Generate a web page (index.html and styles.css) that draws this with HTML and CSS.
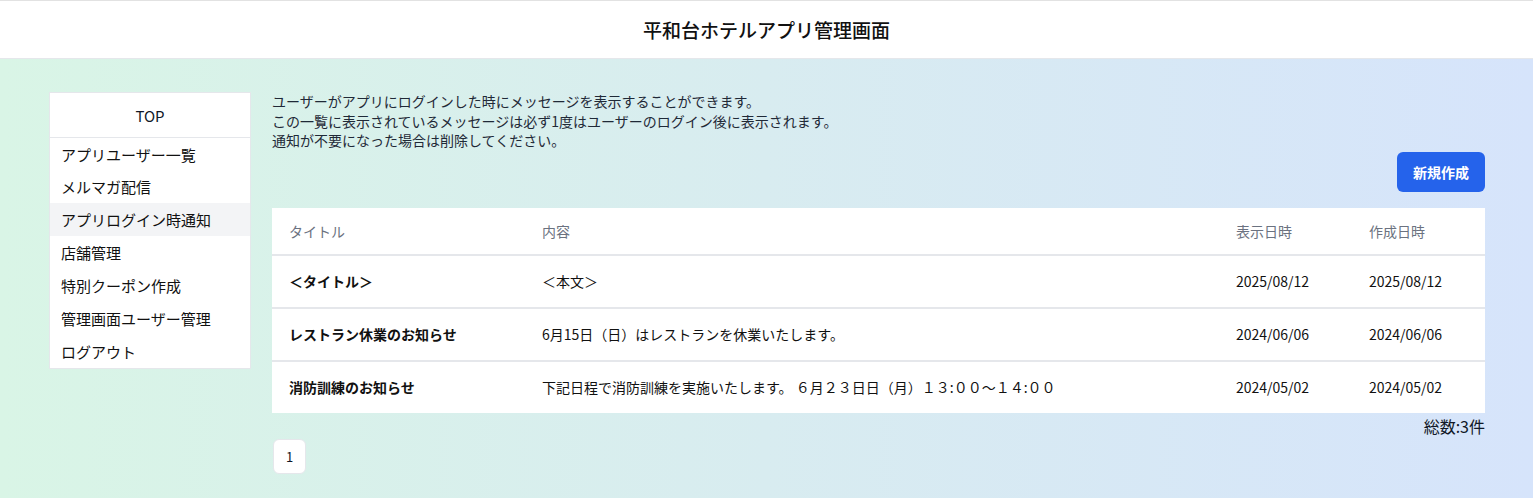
FILE: index.html
```html
<!DOCTYPE html>
<html lang="ja">
<head>
<meta charset="utf-8">
<link rel="stylesheet" href="styles.css">
</head>
<body>
<header class="topbar">
  <h1 class="title">平和台ホテルアプリ管理画面</h1>
</header>
<div class="page">
  <nav class="sidebar">
    <div class="side-top">TOP</div>
    <ul class="side-list">
      <li class="side-item">アプリユーザー一覧</li>
      <li class="side-item">メルマガ配信</li>
      <li class="side-item active">アプリログイン時通知</li>
      <li class="side-item">店舗管理</li>
      <li class="side-item">特別クーポン作成</li>
      <li class="side-item">管理画面ユーザー管理</li>
      <li class="side-item">ログアウト</li>
    </ul>
  </nav>
  <main class="main">
    <p class="desc">ユーザーがアプリにログインした時にメッセージを表示することができます。<br>この一覧に表示されているメッセージは必ず1度はユーザーのログイン後に表示されます。<br>通知が不要になった場合は削除してください。</p>
    <div class="actions"><button class="btn-new">新規作成</button></div>
    <table class="table">
      <thead>
        <tr><th class="c-title">タイトル</th><th class="c-body">内容</th><th class="c-date">表示日時</th><th class="c-date">作成日時</th></tr>
      </thead>
      <tbody>
        <tr><td class="strong">＜タイトル＞</td><td>＜本文＞</td><td>2025/08/12</td><td>2025/08/12</td></tr>
        <tr><td class="strong">レストラン休業のお知らせ</td><td>6月15日（日）はレストランを休業いたします。</td><td>2024/06/06</td><td>2024/06/06</td></tr>
        <tr><td class="strong">消防訓練のお知らせ</td><td>下記日程で消防訓練を実施いたします。 ６月２３日日（月）１３:００～１４:００</td><td>2024/05/02</td><td>2024/05/02</td></tr>
      </tbody>
    </table>
    <div class="total">総数:3件</div>
    <div class="pager"><span class="page-btn">1</span></div>
  </main>
</div>
</body>
</html>
```

FILE: styles.css
```css
* { box-sizing: border-box; }
html, body { margin: 0; padding: 0; }
body {
  font-family: "Noto Sans CJK JP", "Noto Sans", sans-serif;
  color: #111827;
  width: 1533px;
  height: 498px;
  overflow: hidden;
  background: linear-gradient(90deg, #d9f5e6 0%, #d8ecf0 50%, #d6e4fb 100%);
}
.topbar {
  height: 59px;
  background: #fff;
  border-top: 1px solid #e2e2e2;
  border-bottom: 1px solid #e5e7eb;
  display: flex;
  align-items: center;
  justify-content: center;
}
.title {
  margin: 0;
  font-size: 19px;
  font-weight: 500;
  color: #111;
}
.page {
  display: flex;
  gap: 21px;
  padding: 33px 48px 0 49px;
  align-items: flex-start;
}
.sidebar {
  width: 202px;
  background: #fff;
  border: 1px solid #e5e7eb;
  flex: none;
}
.side-top {
  height: 45px;
  display: flex;
  align-items: center;
  justify-content: center;
  font-size: 15px;
  border-bottom: 1px solid #e5e7eb;
}
.side-list {
  list-style: none;
  margin: 0;
  padding: 0;
}
.side-item {
  height: 33px;
  display: flex;
  align-items: center;
  padding-left: 11px;
  font-size: 15px;
  color: #111;
}
.side-list .side-item:first-child { height: 32px; padding-top: 0; }
.side-item.active { background: #f3f4f6; }
.main {
  flex: 1;
  min-width: 0;
}
.desc {
  margin: 0;
  padding-top: 0;
  font-size: 14px;
  line-height: 19.5px;
  color: #1f2937;
}
.actions {
  display: flex;
  justify-content: flex-end;
  margin-top: 1px;
}
.btn-new {
  width: 88px;
  height: 40px;
  border: none;
  border-radius: 6px;
  background: #2563eb;
  color: #fff;
  font-family: inherit;
  font-size: 14px;
  font-weight: 700;
}
.table {
  margin-top: 16px;
  width: 100%;
  border-collapse: collapse;
  background: #fff;
  font-size: 14px;
}
.table th {
  text-align: left;
  font-weight: 400;
  color: #6b7280;
  height: 47px;
  padding: 0 0 0 17px;
  border-bottom: 2px solid #e5e7eb;
}
.table td {
  height: 53px;
  padding: 0 0 0 17px;
  border-bottom: 2px solid #e5e7eb;
  color: #111;
}
.table tbody tr:last-child td { border-bottom: none; height: 52px; }
.c-title { width: 253px; }
.c-date { width: 133px; }
.strong { font-weight: 700; }
.total {
  text-align: right;
  font-size: 16px;
  margin-top: 2px;
  line-height: 23px;
}
.pager {
  margin-top: 1px;
  display: flex;
}
.page-btn {
  width: 33px;
  height: 35px;
  margin-left: 1px;
  background: #fff;
  border: 1px solid #e5e7eb;
  border-radius: 6px;
  display: flex;
  align-items: center;
  justify-content: center;
  font-size: 13px;
}
```
